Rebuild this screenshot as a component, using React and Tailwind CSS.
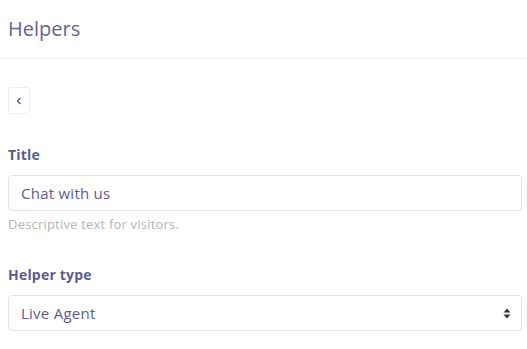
export default function App() {
  const font = { fontFamily: '"Open Sans", sans-serif' };
  return (
    <div className="w-[527px] h-[349px] bg-white overflow-hidden" style={font}>
      <div className="h-[59px] border-b border-[#ececf0] px-2 flex items-center">
        <h1 className="text-[20px] text-[#63639a] leading-none font-normal">Helpers</h1>
      </div>
      <div className="pl-2 pr-[5px]">
        <button className="mt-[28px] w-[22px] h-[27px] border border-[#ececf0] rounded-[3px] flex items-center justify-center">
          <svg width="6" height="8" viewBox="0 0 6 8">
            <path d="M4.5 1 L1.5 4 L4.5 7" fill="none" stroke="#5a5a8c" strokeWidth="1.4" />
          </svg>
        </button>
        <label className="block mt-[31px] text-[14px] font-bold text-[#5c5c8e] leading-[20px] tracking-[0.2px]">Title</label>
        <div className="mt-[10px] h-[36px] border border-[#e3e3e8] rounded-[4px] flex items-center px-[12px] text-[15px] text-[#5c5c8e] tracking-[0.25px]">
          Chat with us
        </div>
        <p className="mt-[4px] text-[13px] text-[#b4b4b8] leading-[18px] tracking-[0.2px]">Descriptive text for visitors.</p>
        <label className="block mt-[32px] text-[14px] font-bold text-[#5c5c8e] leading-[20px] tracking-[0.2px]">Helper type</label>
        <div className="mt-[10px] h-[36px] border border-[#e3e3e8] rounded-[4px] flex items-center justify-between px-[12px] pr-[10px] text-[15px] text-[#5c5c8e] tracking-[0.25px]">
          <span>Live Agent</span>
          <svg width="8" height="11" viewBox="0 0 8 11">
            <path d="M4 0.5 L7.5 4.5 L0.5 4.5 Z" fill="#333" />
            <path d="M4 10.5 L7.5 6.5 L0.5 6.5 Z" fill="#333" />
          </svg>
        </div>
      </div>
    </div>
  );
}
